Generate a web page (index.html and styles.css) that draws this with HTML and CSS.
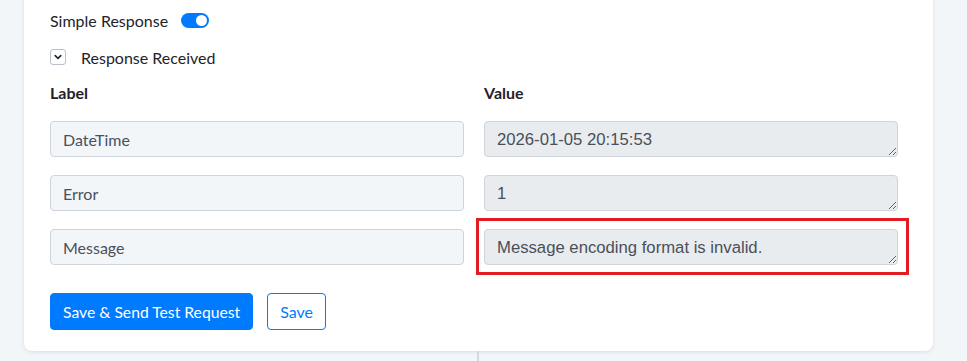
FILE: index.html
```html
<!DOCTYPE html>
<html>
<head>
  <title>Response Received</title>
  <link rel="stylesheet" href="styles.css">
</head>
<body>
<div class="card">
  <div class="switch-row">
    <span>Simple Response</span>
    <span class="switch"><span class="knob"></span></span>
  </div>

  <div class="collapse-row">
    <span class="chevron">
      <svg width="10" height="10" viewBox="0 0 10 10"><path d="M2.2 3.6 L5 6.4 L7.8 3.6" fill="none" stroke="#1f2a37" stroke-width="1.6" stroke-linecap="round" stroke-linejoin="round"/></svg>
    </span>
    <span>Response Received</span>
  </div>

  <div class="fields">
    <div class="head">Label</div>
    <div class="head">Value</div>

    <input class="label-input" type="text" value="DateTime" readonly>
    <textarea class="value-input" readonly>2026-01-05 20:15:53</textarea>

    <input class="label-input" type="text" value="Error" readonly>
    <textarea class="value-input" readonly>1</textarea>

    <input class="label-input" type="text" value="Message" readonly>
    <div class="marked">
      <textarea class="value-input" readonly>Message encoding format is invalid.</textarea>
      <span class="mark"></span>
    </div>
  </div>

  <div class="actions">
    <button class="btn btn-primary">Save &amp; Send Test Request</button>
    <button class="btn btn-outline">Save</button>
  </div>
</div>
<div class="connector"></div>
</body>
</html>
```

FILE: styles.css
```css
body {
  margin: 0;
  background: #f3f6f9;
  font-family: Lato, "Open Sans", sans-serif;
  color: #1f2329;
}
.card {
  width: 909px;
  box-sizing: border-box;
  margin: -10px 0 0 24px;
  padding: 18px 35px 21px 26px;
  background: #fff;
  border-radius: 8px;
  box-shadow: 0 1px 4px rgba(30, 45, 70, 0.12);
}
.switch-row {
  display: flex;
  align-items: center;
  gap: 13px;
  height: 24px;
  font-size: 16px;
}
.switch {
  position: relative;
  width: 28px;
  height: 15px;
  border-radius: 8px;
  background: #007bff;
}
.knob {
  position: absolute;
  top: 2px;
  right: 2px;
  width: 11px;
  height: 11px;
  border-radius: 50%;
  background: #fff;
}
.collapse-row {
  display: flex;
  align-items: center;
  gap: 15px;
  height: 24px;
  margin-top: 13px;
  font-size: 16px;
}
.chevron {
  display: flex;
  align-items: center;
  justify-content: center;
  width: 16px;
  height: 16px;
  box-sizing: border-box;
  border: 1px solid #b9c0c8;
  border-radius: 3px;
}
.fields {
  display: grid;
  grid-template-columns: 414px 414px;
  column-gap: 20px;
  row-gap: 18px;
  margin-top: 13px;
}
.head {
  font-weight: bold;
  font-size: 16px;
  line-height: 21px;
}
.label-input,
.value-input {
  display: block;
  width: 100%;
  height: 36px;
  box-sizing: border-box;
  margin: 0;
  border: 1px solid #ced4da;
  border-radius: 4px;
  color: #4a5059;
  outline: none;
}
.label-input {
  padding: 0 12px;
  background: #f3f6f9;
  font-family: Lato, "Open Sans", sans-serif;
  font-size: 16px;
}
.value-input {
  padding: 8px 12px 6px;
  background: #e9ecef;
  font-family: "Liberation Sans", Arial, sans-serif;
  font-size: 16.7px;
  line-height: 20px;
  resize: vertical;
}
.marked {
  position: relative;
}
.mark {
  position: absolute;
  top: -11px;
  left: -8px;
  right: -11px;
  bottom: -10px;
  border: 3px solid #e31b23;
  pointer-events: none;
}
.actions {
  display: flex;
  gap: 14px;
  margin-top: 28px;
}
.btn {
  height: 37px;
  padding: 0 12px;
  border-radius: 4px;
  font-family: Lato, "Open Sans", sans-serif;
  font-size: 16px;
  cursor: pointer;
}
.btn-primary {
  border: 1px solid #007bff;
  background: #007bff;
  color: #fff;
  font-size: 15.7px;
}
.btn-outline {
  border: 1px solid #007bff;
  background: #fff;
  color: #007bff;
}
.connector {
  width: 2px;
  height: 20px;
  margin-left: 477px;
  background: #d3d8de;
}
```
